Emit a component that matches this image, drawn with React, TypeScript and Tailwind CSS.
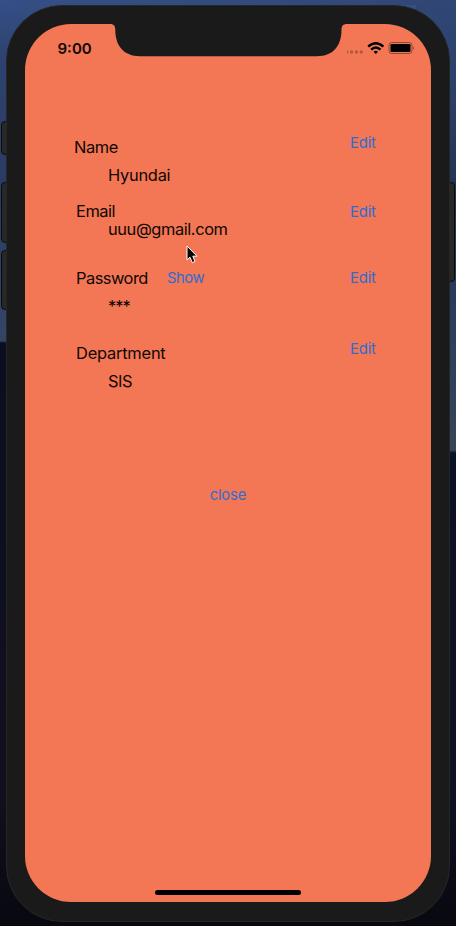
import React from "react";

type Field = {
  label: string;
  value: string;
  box: string;
  labelClass: string;
  valueClass: string;
  editClass: string;
  revealable?: boolean;
};

const fields: Field[] = [
  { label: "Name", value: "Hyundai", box: "h-[68px]", labelClass: "ml-[49.5px] mt-1 w-[60px] tracking-[-0.4px]", valueClass: "mt-2 tracking-[-0.25px]", editClass: "" },
  { label: "Email", value: "uuu@gmail.com", box: "h-[67px]", labelClass: "ml-[51.5px] mt-[0.5px] w-[60px] tracking-[-0.45px]", valueClass: "-mt-[3px] tracking-[-0.4px]", editClass: "mt-px" },
  { label: "Password", value: "***", box: "h-[71px]", labelClass: "ml-[51.5px] mt-0 w-[91px] tracking-[-0.5px]", valueClass: "mt-2 tracking-[-0.9px]", editClass: "", revealable: true },
  { label: "Department", value: "SIS", box: "h-[145px]", labelClass: "ml-[51.5px] mt-1 w-[100px] tracking-[-0.2px]", valueClass: "mt-2 tracking-[-0.4px]", editClass: "" },
];

function FieldRow({ field }: { field: Field }) {
  return (
    <section className={field.box}>
      <div className="flex items-start">
        <span className={`text-[16.4px] leading-5 ${field.labelClass}`}>{field.label}</span>
        {field.revealable && (
          <button className="text-[14.8px] leading-5 tracking-[-0.45px] text-[#2f6dd0]">Show</button>
        )}
        <button className={`mr-[55.5px] ml-auto text-[14.8px] leading-5 tracking-[-0.15px] text-[#2f6dd0] ${field.editClass}`}>Edit</button>
      </div>
      <p className={`ml-[83.5px] text-[16.4px] leading-5 ${field.valueClass}`}>{field.value}</p>
    </section>
  );
}

function StatusBar() {
  return (
    <header className="flex h-[33px] items-start">
      <div className="w-[85px] pt-[15px] pl-[33px] text-[15px] leading-5 font-semibold">9:00</div>
      <svg className="h-[33px] w-[237px] shrink-0" viewBox="0 0 237 33" fill="#191a19">
        <path d="M0-1V0C4 0 5.3 2 5.3 6C5.3 22 14 32.2 30 32.2H207C223 32.2 231.5 22 231.5 6C231.5 2 233 0 237 0V-1Z" />
      </svg>
      <svg className="h-[33px] w-[84px] shrink-0" viewBox="0.5 0 84 33">
        <g fill="#aa5840">
          <circle cx="0.3" cy="27.9" r="1.6" />
          <circle cx="5.1" cy="27.9" r="1.6" />
          <circle cx="9.9" cy="27.9" r="1.6" />
          <circle cx="14.7" cy="27.9" r="1.6" />
        </g>
        <g fill="none" stroke="#000" strokeWidth="2.3">
          <path d="M21.7 22.6Q29.3 15.8 36.9 22.6" />
          <path d="M24.6 25.7Q29.3 21.4 34 25.7" />
        </g>
        <path d="M27.1 27.7Q29.3 26 31.5 27.7L29.3 29.9Z" />
        <rect x="42.5" y="18.5" width="23" height="11" rx="2.7" fill="none" stroke="#8d4936" />
        <rect x="44" y="20" width="20" height="8" rx="1.2" />
        <path d="M66.7 22.4Q68.7 24 66.7 25.8Z" fill="#8d4936" />
      </svg>
    </header>
  );
}

export default function App() {
  return (
    <main className="relative h-[926px] w-[456px] overflow-hidden bg-[linear-gradient(180deg,#354f86_0,#2d426f_60px,#2a3c64_180px,#344666_335px,#35445c_341px,#0c0d20_343px,#10101e_800px,#080810_926px)] pt-[5px] pl-[6px] font-[Inter,sans-serif] text-[#0f0604]">
      <div className="absolute top-0 right-0 h-[926px] w-10 bg-[linear-gradient(180deg,#304775_0,#2c416b_80px,#22314f_200px,#2a3c5c_300px,#364559_450px,#0b1225_453px,#101120_800px,#080810_926px)]" />
      <div className="absolute top-0 left-0 h-[5px] w-[456px] bg-[linear-gradient(90deg,#354f86,#304775)]" />
      <div className="absolute top-[121px] left-px h-[34px] w-2 rounded-sm border border-[#090a0c] bg-[#282927]" />
      <div className="absolute top-[182px] left-px h-[61px] w-2 rounded-sm border border-[#090a0c] bg-[#282927]" />
      <div className="absolute top-[250px] left-px h-[60px] w-2 rounded-sm border border-[#090a0c] bg-[#282927]" />
      <div className="absolute top-[182px] left-[448px] h-[100px] w-[7px] rounded-sm border border-[#090a0c] bg-[#282927]" />
      <div className="relative h-[917px] w-[444px] rounded-[56px] border border-[#252627] bg-[#191a19] pt-[17.5px] pl-[17.5px]">
        <div className="flex h-[878.5px] w-[406.8px] flex-col overflow-hidden rounded-[46px] bg-[#f37655]">
          <StatusBar />
          <div className="pt-[76px]">
            {fields.map((field) => (
              <FieldRow key={field.label} field={field} />
            ))}
          </div>
          <button className="mx-auto mt-px text-[14.8px] leading-5 tracking-[-0.2px] text-[#2f6dd0]">close</button>
          <div className="mx-auto mt-auto mb-[7.5px] h-[5px] w-[145.5px] rounded-full bg-black" />
        </div>
      </div>
      <svg className="absolute top-[245px] left-[186px] h-5 w-3" viewBox="0 0 12 20">
        <path d="M1 1V15L4 12.2L6.3 17.7L9 16.5L6.8 11.2H11Z" fill="#090606" stroke="#fff" strokeWidth="1" strokeLinejoin="round" />
      </svg>
    </main>
  );
}
